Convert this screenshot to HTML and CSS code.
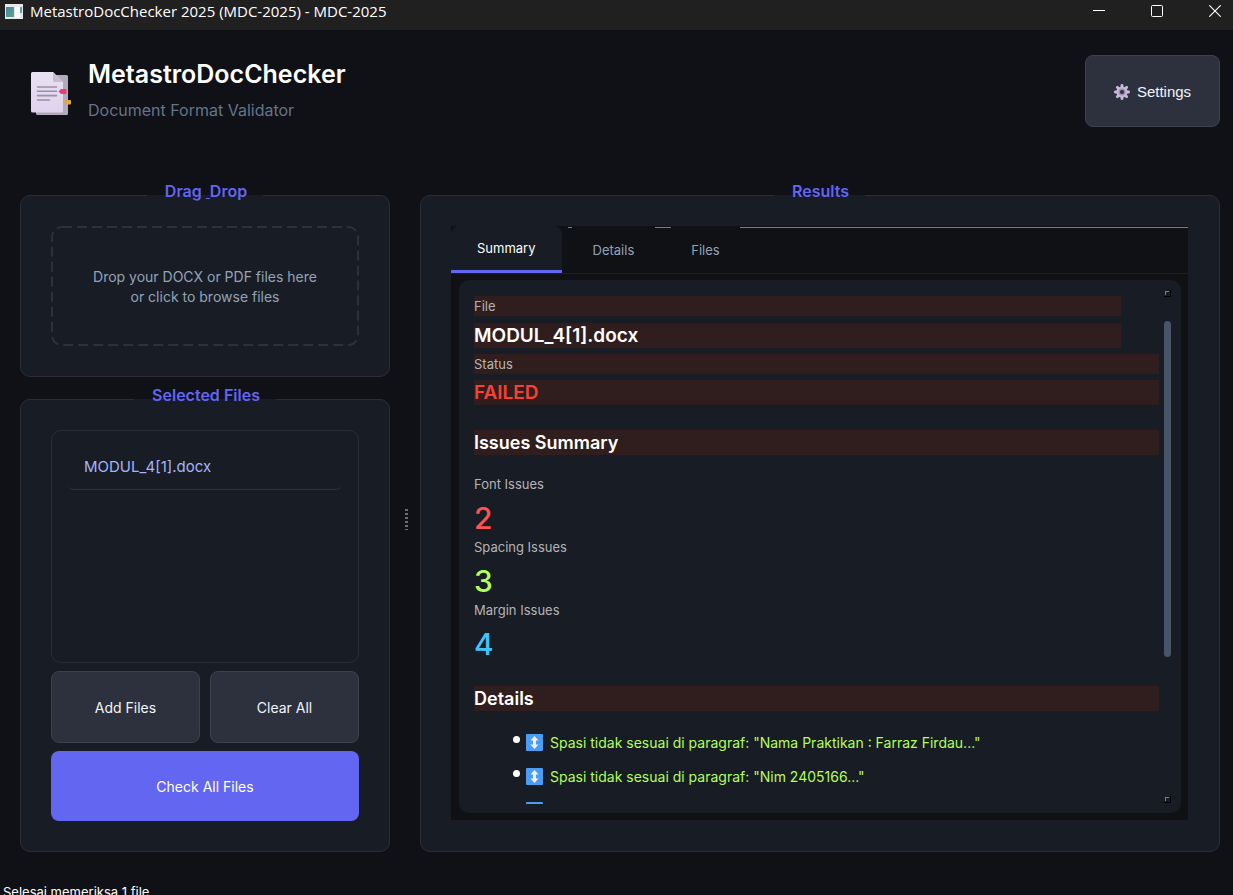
FILE: index.html
```html
<!DOCTYPE html>
<html lang="id">
<head>
<meta charset="utf-8">
<title>MetastroDocChecker 2025 (MDC-2025) - MDC-2025</title>
<link rel="stylesheet" href="styles.css">
</head>
<body>
<div class="titlebar">
  <svg class="app-icon" width="18" height="15" viewBox="0 0 18 15" aria-hidden="true">
    <defs><linearGradient id="app" x1="0" y1="0" x2="1" y2="1"><stop offset="0" stop-color="#4b7fae"/><stop offset="1" stop-color="#57ab7c"/></linearGradient></defs>
    <rect width="18" height="15" fill="#e6e8ea"/>
    <rect x="1" y="3" width="8" height="10" fill="url(#app)"/>
    <rect x="10" y="3" width="5" height="11" fill="#fafafa"/>
    <rect x="15" y="3" width="2" height="6" fill="#5b9fa0"/>
  </svg>
  <span class="window-title">MetastroDocChecker 2025 (MDC-2025) - MDC-2025</span>
  <div class="window-controls">
    <button class="win-btn" aria-label="Minimize"><svg width="12" height="12" viewBox="0 0 12 12"><path d="M0 5.500h12" stroke="#fff"/></svg></button>
    <button class="win-btn" aria-label="Maximize"><svg width="12" height="12" viewBox="0 0 12 12"><rect x=".5" y=".5" width="11" height="11" rx="1" fill="none" stroke="#fff"/></svg></button>
    <button class="win-btn" aria-label="Close"><svg width="12" height="12" viewBox="0 0 12 12"><path d="M.3.3l11.400 11.400M11.700.3L.3 11.700" stroke="#fff" stroke-width="1.100"/></svg></button>
  </div>
</div>

<header class="header">
  <svg class="logo" width="41" height="44" viewBox="0 0 41 44" aria-hidden="true">
    <defs><linearGradient id="page" x1="0" y1="0" x2="0" y2="1"><stop offset="0" stop-color="#e9e2f2"/><stop offset="1" stop-color="#dfd2ee"/></linearGradient></defs>
    <rect x="5" y="3" width="32" height="40" rx="1.500" fill="#b3aabd"/>
    <path d="M1.500 0H22l10 10v29a1.500 1.500 0 0 1-1.500 1.500h-29A1.500 1.500 0 0 1 0 39V1.500A1.500 1.500 0 0 1 1.500 0z" fill="url(#page)"/>
    <path d="M22 0l10 10H23.500A1.500 1.500 0 0 1 22 8.500z" fill="#c6bdcf"/>
    <path d="M6.500 15h19M6.500 19.300h19M6.500 23.600h19M6.500 28h12" stroke="#9a90a5" stroke-width="1.600" stroke-linecap="round"/>
    <path d="M27.500 19.500l2.500-2.500h4.500q1 0 1 1v3q0 1-1 1H30z" fill="#e2416f"/>
    <path d="M32 30.300l2.500-2.300h4.500q1 0 1 1v2.500q0 1-1 1h-4.500z" fill="#e3a846"/>
  </svg>
  <div class="brand">
    <h1 class="brand-name">MetastroDocChecker</h1>
    <p class="brand-sub">Document Format Validator</p>
  </div>
  <button class="btn settings-btn">
    <svg width="16" height="16" viewBox="0 0 16 16" aria-hidden="true">
      <g fill="#c9b9dc"><circle cx="8" cy="8" r="5.600"/><g id="t"><rect x="6.600" y="0" width="2.800" height="16" rx="1.300"/><rect x="0" y="6.600" width="16" height="2.800" rx="1.300"/></g><use href="#t" transform="rotate(45 8 8)"/></g>
      <circle cx="8" cy="8" r="3.600" fill="#9d8fae"/>
      <circle cx="8" cy="8" r="2" fill="#2d313d"/>
    </svg>
    <span>Settings</span>
  </button>
</header>

<main class="main">
  <div class="side">
    <fieldset class="group">
      <legend class="legend">Drag&nbsp;<u>&nbsp;</u>Drop</legend>
      <button class="dropzone">
        <svg class="dash" aria-hidden="true"><rect class="dash-line" x="1" y="1" rx="10"/></svg>
        Drop your DOCX or PDF files here<br>or click to browse files
      </button>
    </fieldset>
    <fieldset class="group group-files">
      <legend class="legend">Selected Files</legend>
      <ul class="file-list"><li class="file-item">MODUL_4[1].docx</li></ul>
      <div class="btn-row">
        <button class="btn">Add Files</button>
        <button class="btn">Clear All</button>
      </div>
      <button class="btn btn-primary">Check All Files</button>
    </fieldset>
  </div>

  <div class="splitter" role="separator" aria-orientation="vertical"><span class="grip"></span></div>

  <fieldset class="group group-results">
    <legend class="legend">Results</legend>
    <div class="tabs">
      <div class="tabbar" role="tablist">
        <button class="tab tab-active" role="tab" aria-selected="true">Summary</button>
        <button class="tab tab-details" role="tab" aria-selected="false">Details</button>
        <button class="tab" role="tab" aria-selected="false">Files</button>
      </div>
      <div class="pane">
        <div class="report">
          <div class="report-view">
            <div class="file-head">
              <p class="label mark">File</p>
              <p class="value mark">MODUL_4[1].docx</p>
            </div>
            <p class="label mark">Status</p>
            <p class="value mark failed">FAILED</p>
            <h2 class="section mark">Issues Summary</h2>
            <div class="stats">
              <p class="label">Font Issues</p>
              <p class="count count-font">2</p>
              <p class="label">Spacing Issues</p>
              <p class="count count-spacing">3</p>
              <p class="label">Margin Issues</p>
              <p class="count count-margin">4</p>
            </div>
            <h2 class="section mark">Details</h2>
            <ul class="issues">
              <li class="issue"><svg class="updown" width="17" height="17" viewBox="0 0 17 17" aria-hidden="true"><rect width="17" height="17" rx="1" fill="#4a9df5"/><path d="M8.500 2l4 4.500h-2.500v4h2.500l-4 4.500-4-4.500H7v-4H4.500z" fill="#f4eefb"/></svg>Spasi tidak sesuai di paragraf: "Nama Praktikan : Farraz Firdau..."</li>
              <li class="issue"><svg class="updown" width="17" height="17" viewBox="0 0 17 17" aria-hidden="true"><rect width="17" height="17" rx="1" fill="#4a9df5"/><path d="M8.500 2l4 4.500h-2.500v4h2.500l-4 4.500-4-4.500H7v-4H4.500z" fill="#f4eefb"/></svg>Spasi tidak sesuai di paragraf: "Nim 2405166..."</li>
              <li class="issue"><svg class="updown" width="17" height="17" viewBox="0 0 17 17" aria-hidden="true"><rect width="17" height="17" rx="1" fill="#4a9df5"/></svg></li>
            </ul>
          </div>
          <div class="scrollbar" aria-hidden="true">
            <span class="arrow"></span>
            <span class="track"><span class="thumb"></span></span>
            <span class="arrow"></span>
          </div>
        </div>
      </div>
    </div>
  </fieldset>
</main>
<footer class="status">Selesai memeriksa 1 file</footer>
</body>
</html>
```
FILE: styles.css
```css
* { box-sizing: border-box; }
body, h1, h2, p, ul, fieldset { margin: 0; padding: 0; }
body {
  display: flex;
  flex-direction: column;
  height: 100vh;
  overflow: hidden;
  background: #101116;
  color: #fff;
  font: 14px/20px Inter, "Liberation Sans", sans-serif;
}
button { font: inherit; color: inherit; border: 0; padding: 0; background: none; }

.titlebar {
  display: flex;
  align-items: center;
  flex: none;
  height: 30px;
  padding: 0 0 8px 5px;
  background: #202020;
}
.window-title {
  flex: 1;
  margin-left: 7px;
  font: 15px/20px "Open Sans", "Noto Sans", sans-serif;
}
.window-controls { display: flex; gap: 22px; }
.win-btn { display: grid; place-items: center; width: 36px; height: 22px; }

.header {
  display: flex;
  align-items: flex-start;
  flex: none;
  height: 152px;
  padding: 25px 13px 0 31px;
}
.logo { margin-top: 17px; }
.brand { flex: 1; margin-left: 16px; }
.brand-name { font-size: 25px; line-height: 38px; font-weight: 600; }
.brand-sub { margin-top: 6px; font-size: 16px; line-height: 22px; color: #64748b; }

.btn {
  height: 72px;
  padding-top: 2px;
  border: 1px solid #3d414e;
  border-radius: 8px;
  background: #2d313d;
  color: #f1f5f9;
}
.settings-btn {
  display: flex;
  align-items: center;
  justify-content: center;
  gap: 7px;
  width: 135px;
  font-family: "Liberation Sans", Arial, sans-serif;
  font-size: 15px;
}

.main {
  display: grid;
  grid-template-columns: 370px 30px 1fr;
  flex: 1;
  min-height: 0;
  padding: 0 13px 0 20px;
}
.side { display: flex; flex-direction: column; gap: 9px; min-height: 0; }
.group {
  display: flex;
  flex-direction: column;
  min-width: 0;
  min-height: 0;
  padding: 18px 30px 30px;
  border: 1px solid #2a2d38;
  border-radius: 10px;
  background: #181c24;
}
.group-files { flex: 1; }
.group-results { padding-right: 31px; padding-bottom: 31px; }
.legend {
  margin: 0 auto;
  padding: 0 16px 8px 18px;
  color: #6366f1;
  font-size: 16px;
  line-height: 18px;
  font-weight: 600;
}

.dropzone {
  position: relative;
  width: 100%;
  height: 120px;
  padding-top: 2px;
  color: #94a3b8;
}
.dash { position: absolute; inset: 0; width: 100%; height: 100%; }
.dash-line {
  width: calc(100% - 2px);
  height: calc(100% - 2px);
  fill: none;
  stroke: #2d313d;
  stroke-width: 2px;
  stroke-dasharray: 10 5;
}

.file-list {
  flex: 1;
  min-height: 0;
  padding: 13px 16px;
  border: 1px solid #2a2d38;
  border-radius: 10px;
  list-style: none;
}
.file-item {
  padding: 13px 16px 12px;
  border-bottom: 1px solid #2d313d;
  border-radius: 6px;
  color: #a5b4fc;
  font-size: 15px;
}
.btn-row { display: grid; grid-template-columns: 1fr 1fr; gap: 10px; margin: 8px 0; }
.btn-primary { height: 70px; border: 0; background: #6366f1; color: #fff; }

.splitter { display: grid; place-items: center; }
.grip {
  width: 3px;
  height: 21px;
  margin: 4px 0 0 3px;
  background: repeating-linear-gradient(#6c6c70 0 2px, transparent 2px 4px);
}

.tabs { display: flex; flex-direction: column; flex: 1; min-height: 0; background: #101114; }
.tabbar {
  position: relative;
  display: flex;
  flex: none;
  height: 48px;
  border-bottom: 1px solid #1c1f26;
}
.tabbar::before {
  content: "";
  position: absolute;
  top: 1px;
  left: 117px;
  right: 0;
  height: 1px;
  background: #7c7c80;
}
.tab {
  position: relative;
  height: 47px;
  padding: 0 20px;
  background: #101114;
  color: #94a3b8;
  font-size: 13px;
}
.tab-active {
  margin-right: 10px;
  padding: 0 26px;
  border-bottom: 3px solid #6366f1;
  border-radius: 8px 8px 0 0;
  background: #181c24;
  box-shadow: 5px 0 0 #101114;
  color: #fff;
}
.tab-details { margin-right: 16px; padding: 0 21px; }

.pane {
  display: flex;
  flex: 1;
  min-height: 0;
  margin-left: 2px;
  padding: 6px 7px 7px 6px;
}
.report {
  display: flex;
  flex: 1;
  min-width: 0;
  padding: 9px 10px 9px 15px;
  border-radius: 10px;
  background: #181c24;
}
.report-view { flex: 1; min-width: 0; padding-top: 7px; overflow: hidden; }
.label { color: #b4b4b4; font-size: 13px; line-height: 20px; }
.value { margin: 6px 0; font-size: 19px; line-height: 25px; font-weight: 600; }
.mark { background: #301e1e; }
.file-head { margin-right: 38px; }
.file-head .value { margin-top: 7px; }
.failed { color: #f44336; }
.section { margin-top: 25px; font-size: 18px; line-height: 25px; font-weight: 600; }
.stats { margin: 19px 0 -2px; }
.count { height: 43px; font-size: 30px; line-height: 48px; font-weight: 500; }
.count-font { color: #ff5252; }
.count-spacing { color: #b2ff59; }
.count-margin { color: #40c4ff; }
.issues { margin-top: 15px; padding-left: 39px; list-style: none; }
.issue { height: 34px; line-height: 34px; color: #b2ff59; white-space: nowrap; }
.issue::before {
  content: "";
  display: inline-block;
  width: 7px;
  height: 7px;
  margin-right: 6px;
  border-radius: 50%;
  background: #fff;
  vertical-align: 5px;
}
.updown { margin-right: 7px; vertical-align: -3px; }

.scrollbar {
  display: flex;
  flex-direction: column;
  width: 7px;
  margin-left: 5px;
  padding: 1px 0;
}
.arrow {
  width: 7px;
  height: 7px;
  border: 1px solid #000;
  border-width: 0 1px 1px 0;
  background: linear-gradient(#808084, #808084) 1px 1px / 4px 1px no-repeat, linear-gradient(#808084, #808084) 1px 1px / 1px 4px no-repeat;
}
.track { flex: 1; padding: 24px 0; }
.thumb { display: block; height: 336px; max-height: 75%; border-radius: 4px; background: #475569; }

.status {
  flex: none;
  height: 43px;
  padding: 31px 0 0 3px;
  overflow: hidden;
  font-size: 13px;
  line-height: 18px;
}
```
